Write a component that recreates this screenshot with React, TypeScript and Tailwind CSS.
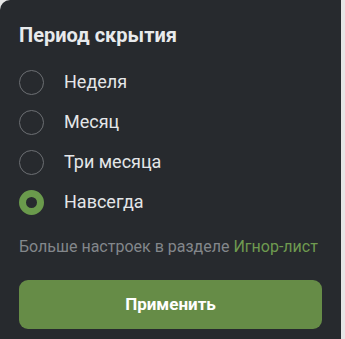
import { useState } from "react";

const OPTIONS = ["Неделя", "Месяц", "Три месяца", "Навсегда"];

export default function App() {
  const [selected, setSelected] = useState(3);

  return (
    <div className="h-[339px] w-[345px] bg-[#e6e6e6]">
      <div
        className="flex h-[339px] w-[341px] flex-col rounded-tl-[10px] bg-[#272a2e] px-[19px] pt-[23px] text-[#e4e6e8]"
        style={{ fontFamily: "Roboto, 'Noto Sans', sans-serif" }}
      >
        <h2 className="text-[20px] font-bold leading-[24px] text-[#e8eaec]">Период скрытия</h2>

        <div className="mt-[15px] flex flex-col">
          {OPTIONS.map((label, i) => (
            <button
              key={label}
              onClick={() => setSelected(i)}
              className="flex h-[40px] items-center gap-[20px] text-left"
            >
              {i === selected ? (
                <span className="h-[25px] w-[25px] rounded-full border-[7px] border-[#6a9a4c]" />
              ) : (
                <span className="h-[25px] w-[25px] rounded-full border-[1.5px] border-[#6c6f73]" />
              )}
              <span className="text-[18px] leading-[22px] text-[#e4e6e8]">{label}</span>
            </button>
          ))}
        </div>

        <p className="mt-[15px] text-[16px] leading-[20px] text-[#83878b]">
          Больше настроек в разделе <span className="text-[#6f9b50]">Игнор-лист</span>
        </p>

        <button className="mt-[23px] h-[49px] w-full rounded-[9px] bg-[#668c47] text-[17px] font-bold text-white">
          Применить
        </button>
      </div>
    </div>
  );
}
